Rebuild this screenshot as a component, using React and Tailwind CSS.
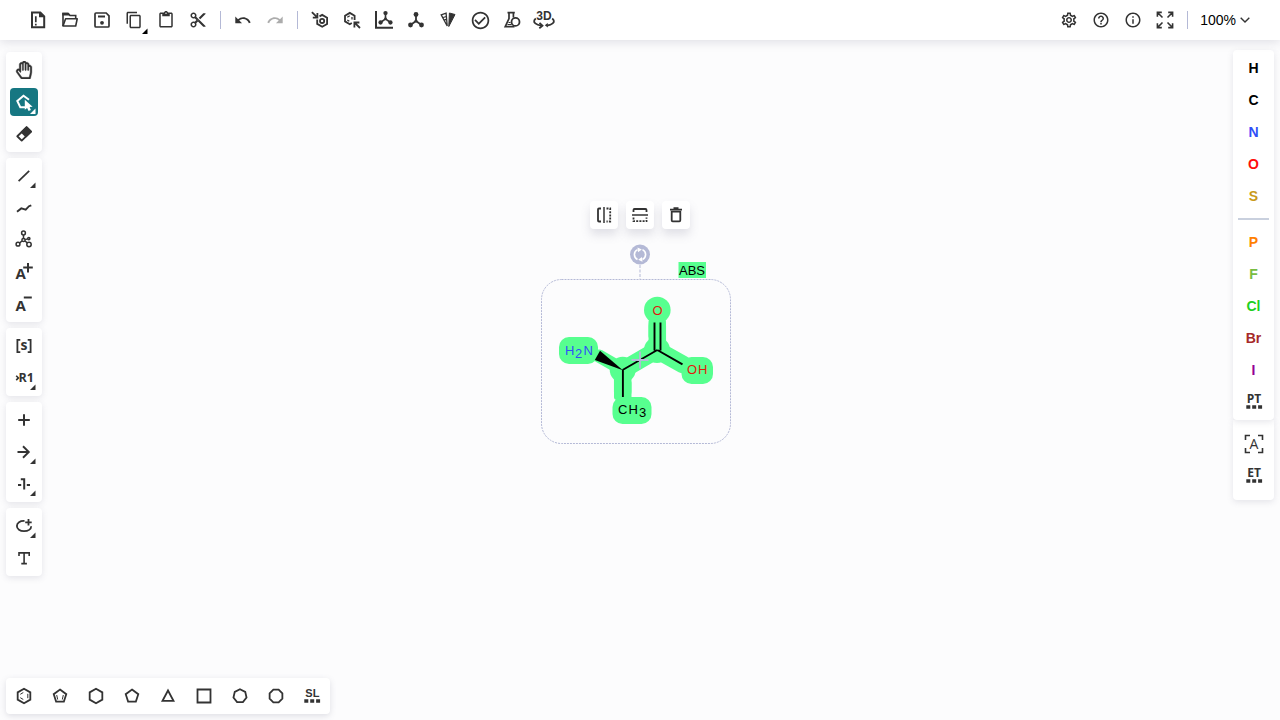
import React from "react";
import {
  MdContentCopy,
  MdContentCut,
  MdContentPaste,
  MdCheckCircleOutline,
  MdHelpOutline,
  MdInfoOutline,
  MdOutlineSettings,
} from "react-icons/md";
import { FaRegHandPaper } from "react-icons/fa";

const INK = "#333333";

function Glyph({ children }) {
  return (
    <svg width="24" height="24" viewBox="0 0 24 24" fill="none" stroke={INK} strokeWidth="1.8" aria-hidden="true" className="overflow-visible">
      {children}
    </svg>
  );
}

function GlyphText({ children, x = 12, y = 17, size = 14, weight = 700, family = "Open Sans" }) {
  return (
    <text x={x} y={y} textAnchor="middle" fontSize={size} fontWeight={weight} fontFamily={`"${family}", sans-serif`} fill={INK} stroke="none">
      {children}
    </text>
  );
}

function ToolButton({ label, corner, cornerTone = "text-[#333333]", active, disabled, children }) {
  return (
    <button
      type="button"
      aria-label={label}
      aria-pressed={active}
      disabled={disabled}
      className={`relative flex h-7 w-7 shrink-0 items-center justify-center rounded ${active ? "bg-[#167782]" : ""} ${disabled ? "opacity-40" : ""}`}
    >
      {children}
      {corner && (
        <svg width="6" height="6" viewBox="0 0 6 6" aria-hidden="true" className={`absolute right-0.5 bottom-0.5 ${active ? "text-white" : cornerTone}`}>
          <path d="M5.500.5V6H0Z" fill="currentColor" />
        </svg>
      )}
    </button>
  );
}

const ringPoints = (n, r, turn = -90, cy = 12) =>
  Array.from({ length: n }, (_, i) => {
    const a = ((turn + (i * 360) / n) * Math.PI) / 180;
    return `${(12 + r * Math.cos(a)).toFixed(2)},${(cy + r * Math.sin(a)).toFixed(2)}`;
  }).join(" ");

function Polygon({ n, r = 7.3, turn, cy }) {
  return <polygon points={ringPoints(n, r, turn, cy)} />;
}

function Dots() {
  return <path d="M4.300 15.300h4v3.500h-4zM10.200 15.300h4v3.500h-4zM16.100 15.300h4v3.500h-4z" fill={INK} stroke="none" />;
}

function Molecule() {
  return (
    <g fill={INK}>
      <path d="M12 7v6l-5.500 4M12 13l5.500 4" fill="none" strokeWidth="1.800" />
      <g stroke="none">
        <circle cx="12" cy="6.500" r="2.400" />
        <circle cx="12" cy="13" r="1.600" />
        <circle cx="6.500" cy="17" r="2.400" />
        <circle cx="17.500" cy="17" r="2.400" />
      </g>
    </g>
  );
}

const undoPath =
  "M12.500 8c-2.650 0-5.050.990-6.900 2.600L2 7v9h9l-3.620-3.620c1.390-1.160 3.160-1.880 5.120-1.880 3.540 0 6.550 2.310 7.600 5.500l2.370-.780C21.080 11.030 17.150 8 12.500 8z";

const Divider = () => <span className="mx-2 h-[18px] w-px bg-[#b4b9d6]" />;

function TopBar() {
  return (
    <header className="relative z-10 flex h-10 shrink-0 items-center justify-between bg-white pr-[30px] pl-6 shadow-[0_2px_10px_rgba(103,104,132,0.2)]">
      <div className="flex items-center">
        <div className="flex gap-1">
          <ToolButton label="Clear canvas">
            <Glyph>
              <path d="M6 4.500h8.300l3.900 4v10.700H6z" strokeWidth="2" />
              <path d="M13 4v5.300h5.300z" fill={INK} stroke="none" />
              <path d="M9.800 8.300v6M9.800 15.700v1.800" strokeWidth="1.700" />
            </Glyph>
          </ToolButton>
          <ToolButton label="Open">
            <Glyph>
              <path d="M5 18V5.500h5.300l1.700 2h5.700v2.800" strokeWidth="1.600" />
              <path d="M5 18l2.600-7.200h11.600L17.700 18z" strokeWidth="1.600" strokeLinejoin="round" />
              <path d="M4.300 4.800h5.800l2 2.700H4.300z" fill={INK} stroke="none" />
            </Glyph>
          </ToolButton>
          <ToolButton label="Save">
            <Glyph>
              <path d="M6 5h10.200L19 7.800V18q0 1-1 1H6q-1 0-1-1V6q0-1 1-1z" strokeWidth="1.700" />
              <path d="M8 8.500h7" strokeWidth="2" />
              <circle cx="12" cy="14.800" r="1.900" fill={INK} stroke="none" />
            </Glyph>
          </ToolButton>
          <ToolButton label="Copy" corner cornerTone="text-black translate-x-0.5 translate-y-0.5">
            <MdContentCopy size={18} color={INK} />
          </ToolButton>
          <ToolButton label="Paste">
            <MdContentPaste size={18} color={INK} />
          </ToolButton>
          <ToolButton label="Cut">
            <MdContentCut size={18} color={INK} />
          </ToolButton>
        </div>
        <Divider />
        <div className="flex gap-1">
          <ToolButton label="Undo">
            <Glyph>
              <path d={undoPath} fill={INK} stroke="none" transform="translate(2.800 3.200) scale(.75)" />
            </Glyph>
          </ToolButton>
          <ToolButton label="Redo" disabled>
            <Glyph>
              <path d={undoPath} fill={INK} stroke="none" transform="translate(21.200 3.200) scale(-.75 .75)" />
            </Glyph>
          </ToolButton>
        </div>
        <Divider />
        <div className="flex gap-1">
          <ToolButton label="Aromatize">
            <Glyph>
              <path d="M11.500 8.400l2.700-1.500 4.900 2.900v6.100l-4.900 2.900-5-2.900v-4.300" />
              <circle cx="14.100" cy="12.900" r="2.100" />
              <path d="M3.900 4.200l5.300 5.200M9.400 4.900v4.700H4.800" />
            </Glyph>
          </ToolButton>
          <ToolButton label="Dearomatize">
            <Glyph>
              <path d="M14.600 12V7.700L9.800 4.900 5 7.700v5.700l4.800 2.800 2-1.200" />
              <path d="M7.300 9.200l2.400-1.500M7.300 12l2 1.300M12 9v2.500" strokeWidth="1.300" />
              <path d="M20 20l-5.400-5.400M14.400 19.400v-4.900h5" />
            </Glyph>
          </ToolButton>
          <ToolButton label="Layout">
            <Glyph>
              <path d="M4 3v16.700h17" strokeWidth="2" />
              <g transform="translate(2.700 -.8) scale(.9)"><Molecule /></g>
            </Glyph>
          </ToolButton>
          <ToolButton label="Clean up">
            <Glyph><Molecule /></Glyph>
          </ToolButton>
          <ToolButton label="Calculate CIP">
            <Glyph>
              <path d="M12.800 18.500L13.400 5l5.600 1.500z" fill={INK} strokeWidth="1" />
              <path d="M11.200 18L5.200 6.800l4.900-1.600z" strokeWidth="1.300" />
              <path d="M7 9.500l3.500-1M8.200 12l2.400-.6" strokeWidth="1.300" />
            </Glyph>
          </ToolButton>
          <ToolButton label="Check structure">
            <MdCheckCircleOutline size={21} color={INK} />
          </ToolButton>
          <ToolButton label="Calculated values">
            <Glyph>
              <path d="M7.500 4.700h7.300M9 5v5.500L5.200 18.700h9.300M13.400 5v4.500" strokeWidth="1.700" />
              <circle cx="15.500" cy="13.900" r="4" />
              <path d="M7.500 16.500h4M8.500 14.500h2" strokeWidth="1.200" />
            </Glyph>
          </ToolButton>
          <ToolButton label="3D viewer">
            <Glyph>
              <GlyphText y={12} size={12} family="Liberation Sans">3D</GlyphText>
              <path d="M3.800 10.500c-2 1.500-2.300 3.500-.5 4.900 1.400 1.200 3.300 1.900 5.800 2.200M20.200 10.500c2 1.500 2.300 3.500.5 4.900-1.300 1.100-3.100 1.800-5.500 2.100" />
              <path d="M7.500 14.800l3 2.900-3.200 2.500" />
              <path d="M12.800 17.300l3-2.300v4.600z" fill={INK} stroke="none" />
            </Glyph>
          </ToolButton>
        </div>
      </div>
      <div className="flex items-center">
        <div className="flex gap-1">
          <ToolButton label="Settings"><MdOutlineSettings size={18} color={INK} /></ToolButton>
          <ToolButton label="Help"><MdHelpOutline size={18} color={INK} /></ToolButton>
          <ToolButton label="About"><MdInfoOutline size={18} color={INK} /></ToolButton>
          <ToolButton label="Fullscreen">
            <Glyph>
              <path d="M4.400 8.800V4.400h4.400M4.500 4.500l5 5M19.600 8.800V4.400h-4.400M19.500 4.500l-5 5M4.400 15.200v4.400h4.400M4.500 19.500l5-5M19.600 15.200v4.400h-4.400M19.500 19.500l-5-5" strokeWidth="1.600" />
            </Glyph>
          </ToolButton>
        </div>
        <Divider />
        <button type="button" className="ml-1 flex items-center gap-1 font-['Liberation_Sans',sans-serif] text-sm text-black">
          100%
          <svg width="10" height="6" viewBox="0 0 10 6" fill="none" stroke={INK} strokeWidth="1.400" aria-hidden="true">
            <path d="M.7.7L5 5 9.300.7" />
          </svg>
        </button>
      </div>
    </header>
  );
}

function Panel({ label, children }) {
  return (
    <div role="toolbar" aria-label={label} className="flex flex-col gap-1 rounded bg-white p-1 shadow-[0_2px_6px_rgba(103,104,132,0.16)]">
      {children}
    </div>
  );
}

function LeftTools() {
  return (
    <aside className="relative flex w-12 flex-col gap-1.5 px-1.5 pt-3">
      <Panel label="Selection">
        <ToolButton label="Hand">
          <FaRegHandPaper size={18} color={INK} stroke={INK} strokeWidth={10} />
        </ToolButton>
        <ToolButton label="Lasso selection" corner active>
          <Glyph>
            <path d="M13.500 17.200H8.300L5.300 11 11.500 5.700l5.500 4" stroke="white" strokeWidth="2" />
            <path d="M12.800 9.800l7.800 7-3 .3 1.300 3-2.300 1-1.500-3-2.300 1.700z" fill="white" stroke="none" />
          </Glyph>
        </ToolButton>
        <ToolButton label="Erase">
          <Glyph>
            <path d="M14.700 5.300l4.300 4.300-9.300 9-4.400-4.300z" strokeWidth="1.900" strokeLinejoin="round" />
            <path d="M14.700 5.300l4.300 4.300-5 4.800-4.300-4.300z" fill={INK} strokeWidth="1.900" strokeLinejoin="round" />
          </Glyph>
        </ToolButton>
      </Panel>
      <Panel label="Drawing">
        <ToolButton label="Bond" corner>
          <Glyph><path d="M6.600 17.200L17.200 6.800" strokeWidth="1.700" /></Glyph>
        </ToolButton>
        <ToolButton label="Chain">
          <Glyph><path d="M5 15.800l4.300-3.400 4.400 1.200 3.300-3.400 2.300-.9" strokeWidth="1.900" /></Glyph>
        </ToolButton>
        <ToolButton label="Stereochemistry">
          <Glyph>
            <g strokeWidth="1.500">
              <circle cx="11.500" cy="5" r="1.900" />
              <circle cx="11.500" cy="12" r="1.600" />
              <circle cx="6" cy="16.200" r="1.900" />
              <circle cx="17" cy="16.500" r="2.200" />
              <circle cx="16.800" cy="10.600" r="1.100" />
              <path d="M11.500 7v3.300M10 13l-2.300 1.800M13 13l2.300 1.900M13.200 11.600l2.300-.7" />
            </g>
          </Glyph>
        </ToolButton>
        <ToolButton label="Charge plus">
          <Glyph>
            <GlyphText x={8.7} y={19.3} size={15}>A</GlyphText>
            <path d="M11.200 7.600h9.600M16 2.900v9.600" strokeWidth="2" />
          </Glyph>
        </ToolButton>
        <ToolButton label="Charge minus">
          <Glyph>
            <GlyphText x={8.7} y={19.3} size={15}>A</GlyphText>
            <path d="M11.800 5.500h8" strokeWidth="2" />
          </Glyph>
        </ToolButton>
      </Panel>
      <Panel label="Groups">
        <ToolButton label="S-group">
          <Glyph>
            <path d="M8.300 5.800H5.400v12.400h2.900M15.700 5.800h2.900v12.400h-2.900" />
            <GlyphText y={16} size={14}>s</GlyphText>
          </Glyph>
        </ToolButton>
        <ToolButton label="R-group label" corner>
          <Glyph>
            <path d="M4.200 9.700l2.200 2.200-2.200 2.200" strokeWidth="1.600" />
            <GlyphText x={14.3} y={16.3} size={12.5}>R1</GlyphText>
          </Glyph>
        </ToolButton>
      </Panel>
      <Panel label="Reactions">
        <ToolButton label="Reaction plus">
          <Glyph><path d="M6.200 12h11.600M12 6.200v11.600" strokeWidth="2" /></Glyph>
        </ToolButton>
        <ToolButton label="Reaction arrow" corner>
          <Glyph><path d="M5.500 12h11.700M11 6.300l5.800 5.700-5.800 5.700" strokeWidth="1.900" /></Glyph>
        </ToolButton>
        <ToolButton label="Reaction mapping" corner>
          <Glyph>
            <path d="M6 13h3.200M14.800 13H18" strokeWidth="2" />
            <path d="M8.800 7.200h3.400v10.200" strokeWidth="2" />
          </Glyph>
        </ToolButton>
      </Panel>
      <Panel label="Annotations">
        <ToolButton label="Shape" corner>
          <Glyph>
            <path d="M12.500 7C8 6.700 4.900 9 4.900 12c0 3 3.100 5.200 7.100 5.200 4.200 0 7.200-2.100 7.200-5" />
            <path d="M13.200 8.300h6.500M16.500 5v6.500" />
          </Glyph>
        </ToolButton>
        <ToolButton label="Text">
          <Glyph><path d="M7 10V6.900h10.200V10M12.100 6.900v10.600M9.300 17.600h5.600" strokeWidth="1.600" /></Glyph>
        </ToolButton>
      </Panel>
    </aside>
  );
}

const elements = [
  ["H", "text-black"],
  ["C", "text-black"],
  ["N", "text-[#304ff7]"],
  ["O", "text-[#ff0d0d]"],
  ["S", "text-[#c99a19]"],
  ["P", "text-[#ff8000]"],
  ["F", "text-[#78bc42]"],
  ["Cl", "text-[#1fd01f]"],
  ["Br", "text-[#a62929]"],
  ["I", "text-[#940094]"],
];

function ElementButton({ item: [symbol, tone] }) {
  return (
    <button type="button" className={`h-7 w-7 font-['Liberation_Sans',sans-serif] text-sm font-bold ${tone}`}>
      {symbol}
    </button>
  );
}

function RightTools() {
  return (
    <aside className="relative flex flex-col pt-2.5 pr-1.5">
      <div className="relative flex w-[41px] flex-col items-center gap-1 rounded bg-white py-1 shadow-[0_2px_6px_rgba(103,104,132,0.16)]">
        {elements.slice(0, 5).map((e) => <ElementButton key={e[0]} item={e} />)}
        <hr className="my-1 h-0.5 w-[31px] border-0 bg-[#c9d0de]" />
        {elements.slice(5).map((e) => <ElementButton key={e[0]} item={e} />)}
        <ToolButton label="Periodic table">
          <Glyph><GlyphText y={13} size={12}>PT</GlyphText><Dots /></Glyph>
        </ToolButton>
      </div>
      <div className="flex w-[41px] flex-col items-center gap-1 rounded-b bg-white py-2.5 shadow-[0_2px_6px_rgba(103,104,132,0.16)]">
        <ToolButton label="Any atom">
          <Glyph>
            <path d="M3.500 8V3.500H8M16 3.500h4.500V8M20.500 16v4.500H16M8 20.500H3.500V16" strokeWidth="1.600" />
            <GlyphText y={17} size={14} weight={500}>A</GlyphText>
          </Glyph>
        </ToolButton>
        <ToolButton label="Extended table">
          <Glyph><GlyphText y={13} size={12}>ET</GlyphText><Dots /></Glyph>
        </ToolButton>
      </div>
    </aside>
  );
}

function Templates() {
  return (
    <footer className="relative flex shrink-0 p-1.5">
      <div role="toolbar" aria-label="Templates" className="flex gap-2 rounded bg-white p-1 shadow-[0_2px_6px_rgba(103,104,132,0.2)]">
        <ToolButton label="Benzene">
          <Glyph>
            <Polygon n={6} />
            <path d="M8.300 10.300l3-1.800M8.300 13.700l3 1.800M15.800 9.800v4.400" strokeWidth="1" />
          </Glyph>
        </ToolButton>
        <ToolButton label="Cyclopentadiene">
          <Glyph>
            <Polygon n={5} r={6.6} cy={12.2} />
            <path d="M8.700 11l1 4.500M15.300 11l-1 4.500" strokeWidth="1" />
          </Glyph>
        </ToolButton>
        <ToolButton label="Cyclohexane"><Glyph><Polygon n={6} /></Glyph></ToolButton>
        <ToolButton label="Cyclopentane"><Glyph><Polygon n={5} r={6.6} cy={12.2} /></Glyph></ToolButton>
        <ToolButton label="Cyclopropane"><Glyph><path d="M12 6.500l5.500 10.300h-11z" /></Glyph></ToolButton>
        <ToolButton label="Cyclobutane"><Glyph><path d="M5.500 5.500h13v13h-13z" /></Glyph></ToolButton>
        <ToolButton label="Cycloheptane"><Glyph><Polygon n={7} r={6.700} /></Glyph></ToolButton>
        <ToolButton label="Cyclooctane"><Glyph><Polygon n={8} r={6.900} turn={22.5} /></Glyph></ToolButton>
        <ToolButton label="Structure library">
          <Glyph><GlyphText x={12.4} y={12.7} size={11} family="Liberation Sans">SL</GlyphText><Dots /></Glyph>
        </ToolButton>
      </div>
    </footer>
  );
}

function FloatingButton({ label, children }) {
  return (
    <button type="button" aria-label={label} className="flex h-7 w-7 items-center justify-center rounded bg-white shadow-[0_6px_10px_rgba(103,104,132,0.18)]">
      {children}
    </button>
  );
}

function Structure() {
  return (
    <div className="absolute top-[161px] left-1/2 flex w-[200px] -translate-x-1/2 flex-col">
      <div className="flex justify-center gap-2">
        <FloatingButton label="Horizontal flip">
          <Glyph>
            <path d="M9 5.500H7q-1 0-1 1v11q0 1 1 1h2" />
            <path d="M12 4v16" strokeWidth="1.500" />
            <path d="M14.500 5.500h3.700v13h-3.700" strokeDasharray="2 1.200" />
          </Glyph>
        </FloatingButton>
        <FloatingButton label="Vertical flip">
          <Glyph>
            <path d="M5.500 9V7q0-1 1-1h11q1 0 1 1v2" />
            <path d="M4 12h16" strokeWidth="1.500" />
            <path d="M5.500 14.500v3.700h13v-3.700" strokeDasharray="2 1.200" />
          </Glyph>
        </FloatingButton>
        <FloatingButton label="Delete">
          <Glyph>
            <path d="M6 6.600h12M9.500 5.200h5" strokeWidth="1.700" />
            <path d="M7.700 8.700h8.600v8.600q0 1-1 1H8.700q-1 0-1-1z" />
          </Glyph>
        </FloatingButton>
      </div>
      <svg width="200" height="221" viewBox="540 229 200 221" role="img" aria-label="Alanine structure" fontFamily='"Liberation Sans", sans-serif' fontSize="13">
        <rect x="541.500" y="279.500" width="189" height="164" rx="20" fill="none" stroke="#b4b9d6" strokeDasharray="2 1" />
        <path d="M640 265v14" stroke="#b4b9d6" strokeDasharray="3 1.500" />
        <circle cx="640" cy="254.500" r="10" fill="#b4b9d6" />
        <g fill="none" stroke="white" strokeWidth="1.600">
          <path d="M637.500 249.600a5.500 5.500 0 0 0 0 9.900M642.500 259.500a5.500 5.500 0 0 0 0-9.900" />
        </g>
        <path d="M637.500 247.500l4.300 2-3.800 2.700zM642.500 261.700l-4.300-2 3.800-2.700z" fill="white" />

        <g fill="none" stroke="#57ff8f" strokeWidth="17.500" strokeLinecap="round">
          <path d="M657.300 326v24M622.700 370v22M657 350l-34.300 20M657 350l26 14.500" />
          <path d="M599 356l23.700 13.700" strokeWidth="13" />
        </g>
        <g fill="#57ff8f">
          <rect x="614" y="380" width="17.500" height="20" rx="3" />
          <rect x="648.500" y="319" width="17.500" height="20" rx="3" />
          <circle cx="657.300" cy="310" r="13.300" />
          <circle cx="657" cy="350" r="13" />
          <circle cx="622.700" cy="369.700" r="13" />
          <rect x="559" y="337" width="39" height="27" rx="10" />
          <rect x="681.500" y="357" width="31.500" height="27" rx="10" />
          <rect x="612.500" y="397" width="39" height="27" rx="10" />
          <rect x="678.500" y="262" width="27.500" height="16" />
        </g>
        <g fill="none" stroke="black" strokeWidth="2">
          <path d="M654.500 322.500v28M660.500 322.500v28M657.300 350l-34.300 19.800M657.300 350l25.200 14.300M622.900 369.500V397" strokeWidth="1.900" />
        </g>
        <path d="M622.900 370.200L600 350.800l-5.200 9.200z" fill="black" />
        <path d="M631.500 360h17M640 351.500v17" stroke="#b4b9d6" strokeWidth="1.800" />
        <text y="355" fill="#304ff7"><tspan x="565">H</tspan><tspan x="575" y="358">2</tspan><tspan x="583.500" y="355">N</tspan></text>
        <text x="657.500" y="315" textAnchor="middle" fill="#e01a0d">O</text>
        <text y="374" fill="#e01a0d"><tspan x="687">O</tspan><tspan x="698">H</tspan></text>
        <text y="414"><tspan x="618">C</tspan><tspan x="628.500">H</tspan><tspan x="639" y="417">3</tspan></text>
        <text x="679" y="275">ABS</text>
      </svg>
    </div>
  );
}

export default function App() {
  return (
    <div className="flex h-screen flex-col overflow-hidden bg-[#fcfcfd] font-['Liberation_Sans',sans-serif]">
      <TopBar />
      <main className="relative flex min-h-0 flex-1 justify-between">
        <Structure />
        <LeftTools />
        <RightTools />
      </main>
      <Templates />
    </div>
  );
}
